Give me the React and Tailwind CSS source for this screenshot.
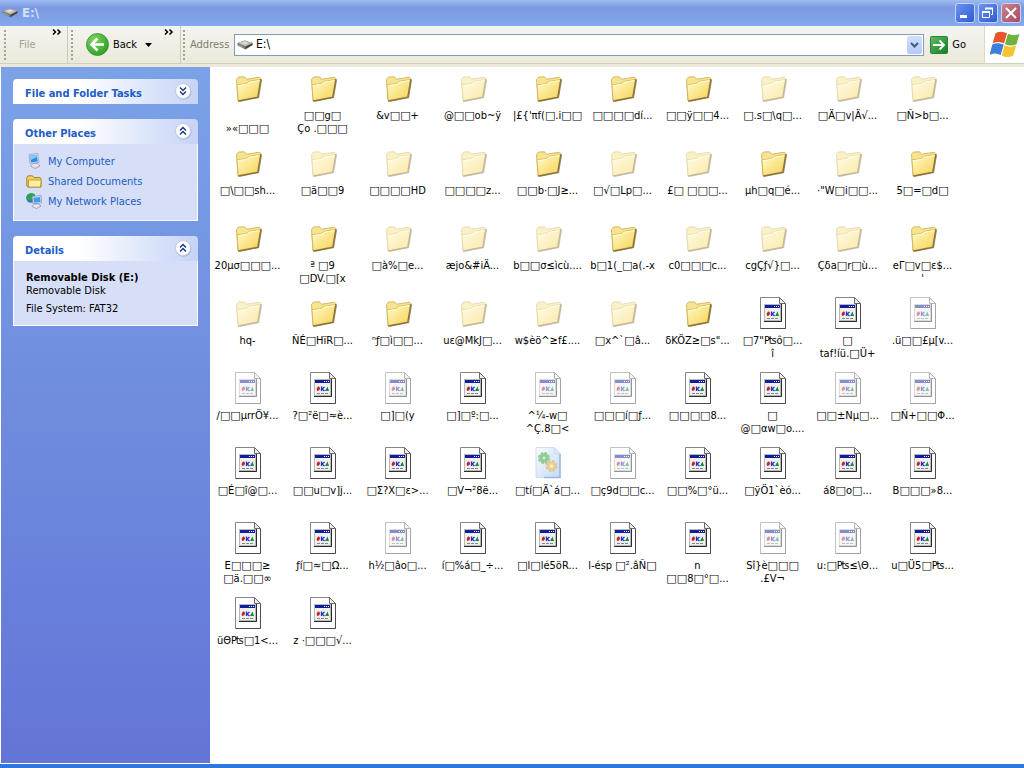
import React, { useState } from 'react';

// Each entry: [kind, label, hidden]. Labels keep their own line breaks.
const ITEMS = [
  ['folder', '\n»«□□□'],
  ['folder', '□□g□\nÇo .□□□'],
  ['folder', '&v□□+'],
  ['folder', '@□□ob~ÿ', true],
  ['folder', "|£{'πf(□.i□□"],
  ['folder', '□□□□dí...'],
  ['folder', '□□ÿ□□4...'],
  ['folder', '□.s□\\q□...', true],
  ['folder', '□Ä□v|Ä√...', true],
  ['folder', '□Ñ>b□...', true],

  ['folder', '□\\□□sh...'],
  ['folder', '□ä□□9', true],
  ['folder', '□□□□HD', true],
  ['folder', '□□□□z...', true],
  ['folder', '□□b·□J≥...'],
  ['folder', '□√□Lp□...', true],
  ['folder', '£□ □□□...', true],
  ['folder', 'µh□q□é...'],
  ['folder', '·"W□i□□...', true],
  ['folder', '5□=□d□'],

  ['folder', '20µσ□□□...'],
  ['folder', 'ª □9\n□DV.□[x'],
  ['folder', '□à%□e...', true],
  ['folder', 'æjo&#iÄ...', true],
  ['folder', 'b□□σ≤ìcù....', true],
  ['folder', 'b□1(_□a(.-x'],
  ['folder', 'c0□□□c...', true],
  ['folder', 'cgÇƒ√}□...', true],
  ['folder', 'Çδa□r□ù...', true],
  ['folder', "eΓ□v□ε$...\n'"],

  ['folder', 'hq-', true],
  ['folder', 'ÑÉ□HïR□...'],
  ['folder', 'ⁿƒ□ì□□...'],
  ['folder', 'uε@MkJ□...', true],
  ['folder', 'w$èö^≥f£....', true],
  ['folder', '□x^`□â...', true],
  ['folder', 'δKÖZ≥□s"...'],
  ['file', '□7"₧ô□...\nî'],
  ['file', '□\ntaf!íü.□Ü+'],
  ['file', '.ü□□£µ[v...', true],

  ['file', '/□□µrrÖ¥...', true],
  ['file', '?□²ë□≈è...'],
  ['file', '□]□(y', true],
  ['file', '□]□º:□...'],
  ['file', '^¼-w□\n^Ç.8□<', true],
  ['file', '□□□í□ƒ...', true],
  ['file', '□□□□8...'],
  ['file', '□\n@□αw□o....'],
  ['file', '□□±Nµ□...', true],
  ['file', '□Ñ+□□Φ...', true],

  ['file', '□É□î@□...'],
  ['file', '□□u□v]j...'],
  ['file', '□Σ?X□ε>...'],
  ['file', '□V¬²8ë...'],
  ['config', '□tí□Ä`á□...', true],
  ['file', '□ç9d□□c...', true],
  ['file', '□□%□°ü...'],
  ['file', '□ÿÖ1`èó...'],
  ['file', 'á8□o□...'],
  ['file', 'B□□□»8...'],

  ['file', 'E□□□≥\n□ä.□□∞'],
  ['file', 'ƒí□≈□Ω...'],
  ['file', 'h½□âo□...', true],
  ['file', 'í□%á□_÷...'],
  ['file', '□l□lé5öR...'],
  ['file', 'l-ésp □².âÑ□'],
  ['file', 'n\n□□8□°□...'],
  ['file', 'Sî}è□□□\n.£V¬', true],
  ['file', 'u:□₧≤\\Θ...', true],
  ['file', 'u□Ü5□₧...'],

  ['file', 'üΘ₧□1<...'],
  ['file', 'z ·□□□√...'],
];

function FolderIcon() {
  return (
    <svg width="32" height="32" viewBox="0 0 32 32" aria-hidden="true">
      <path d="M7 30L27 26 30 8l-2-1z" fill="#5f5436" opacity=".7" />
      <path d="M4.500 7.500L6.500 5l6-.2L14.500 7.200 27.500 5.200 28.800 6.500 25.800 25 6 28.800z" fill="#f7e48f" stroke="#c9a951" strokeWidth=".8" />
      <path d="M5 12.800L14 11.700 17.300 9.300 28.500 7.500 25.500 24.800 6.200 28.600z" fill="url(#folderFront)" stroke="#cfaa46" strokeWidth=".7" />
      <path d="M5.800 13.700l8.600-1.200 3.200-2.300L27.600 8.600" fill="none" stroke="#fffde2" />
      <path d="M6 29.200L25.800 25.300 28.900 7" fill="none" stroke="#8a7136" strokeWidth="1.200" />
    </svg>
  );
}

function FileIcon() {
  return (
    <svg width="32" height="32" viewBox="0 0 32 32" aria-hidden="true">
      <path d="M3.500.5h19l6 6v25h-25z" fill="#fff" stroke="#858585" />
      <path d="M28.500 6.500v25h-25" fill="none" stroke="#4c4c4c" />
      <path d="M22.500.5v6h6z" fill="#ececec" stroke="#6a6a6a" />
      <path d="M7 7h18v18H7z" fill="#b9b9b5" />
      <path d="M8 11h15v12H8z" fill="#efefed" />
      <path d="M8 8h15v3H8z" fill="#101d9c" />
      <path d="M17 9.500h1M19 9.500h1M21 9.500h1" stroke="#fff" />
      <path d="M24.500 7v17.500H7" fill="none" stroke="#2b2b2b" />
      <path d="M11.500 14.500c2.500.5 1.500 4.500-1 4.500-1.500-1-.7-4 1-4.500z" fill="#c5231f" />
      <path d="M14.500 14.500v4.500M17.500 15l-2.500 2 2.500 2" fill="none" stroke="#2232c8" strokeWidth="1.300" />
      <path d="M18 19l2.500-4.500L22 19z" fill="#118a4a" />
      <path d="M10 21.500h3M14 21.500h3M18 21.500h3" stroke="#85858c" />
    </svg>
  );
}

function ConfigIcon() {
  return (
    <svg width="32" height="32" viewBox="0 0 32 32" aria-hidden="true">
      <path d="M4 .5h18l6 6v24H4z" fill="url(#configPage)" stroke="#8fb0de" strokeWidth=".8" />
      <path d="M28 7v23.500H12" fill="none" stroke="#3a6fbe" strokeWidth="1.500" />
      <path d="M22 .5v6h6z" fill="#b3d1f5" stroke="#8fb0de" strokeWidth=".6" />
      <circle cx="12" cy="11" r="4.500" fill="#279a2c" stroke="#279a2c" strokeWidth="3" strokeDasharray="2.500 1" />
      <circle cx="19.500" cy="19" r="4.500" fill="#dca92a" stroke="#c8912a" strokeWidth="3" strokeDasharray="2.500 1" />
      <circle cx="12" cy="11" r="1.500" fill="#a9dba8" />
      <circle cx="19.500" cy="19" r="1.500" fill="#f5e6b0" />
    </svg>
  );
}

function DriveIcon() {
  return (
    <svg width="16" height="16" viewBox="0 0 16 16" aria-hidden="true" className="shrink-0">
      <path d="M.5 6L8 3.500 15.500 6v2L8.500 12.500.5 8.500z" fill="#77776f" />
      <path d="M.5 6L8 3.500 15.500 6 8.500 9.500z" fill="#b5b5b0" />
      <path d="M3 6l5-1.500L12 6l-4 1.700z" fill="#dcdcd8" />
      <path d="M8.500 9.800l7-3.500v1.800l-7 4z" fill="#44443f" />
      <path d="M1.500 8l5 2.500" stroke="#a8a89f" />
    </svg>
  );
}

function ComputerIcon() {
  return (
    <svg width="16" height="16" viewBox="0 0 16 16" aria-hidden="true">
      <path d="M3 1.500L11.500.5l1.500 9-9 1z" fill="#d9dfec" stroke="#8d99b5" strokeWidth=".7" />
      <path d="M4.200 2.700l6.500-.8 1 6.500-6.700.8z" fill="#2b8be8" />
      <path d="M4.200 2.700l6.500-.8.3 2-6.300 3z" fill="#82ccf8" />
      <path d="M7 10.500h4l3 2.500-5 2.500L4.500 13z" fill="#e5e5ea" stroke="#8b8fa4" strokeWidth=".7" />
    </svg>
  );
}

function SharedIcon() {
  return (
    <svg width="16" height="16" viewBox="0 0 16 16" aria-hidden="true">
      <path d="M.8 4.500L2 2.800h4.500L8 4.500h6l1 1.500v8H2L.8 13z" fill="#f0cf5a" stroke="#a88225" />
      <path d="M2.500 7h12.700l-.7 7H2.500z" fill="#fdf0a0" stroke="#b68e2d" strokeWidth=".8" />
    </svg>
  );
}

function NetworkIcon() {
  return (
    <svg width="16" height="16" viewBox="0 0 16 16" aria-hidden="true">
      <circle cx="5" cy="5" r="4.800" fill="#2f76c9" />
      <path d="M1 3c3-4 7-3 8-1L7 6 3 8C1 7 0 5 1 3z" fill="#34a345" />
      <path d="M6 3.500l9-1 .8 7.500-8.800.8z" fill="#dce5f2" stroke="#7e8fae" strokeWidth=".7" />
      <path d="M7.200 4.700l6.800-.8.600 5-6.500.8z" fill="#3d9cef" />
      <path d="M8.500 11h4l2.500 2-4.500 2.500L6 13.500z" fill="#e6e6eb" stroke="#8388a0" strokeWidth=".7" />
    </svg>
  );
}

function WindowsFlag() {
  return (
    <svg width="30" height="28" viewBox="0 0 30 28" aria-hidden="true">
      <path d="M5.500 2.200C9 .3 13 .3 17 2.300L14 12.600c-4-2-7.500-2-11.400-.2z" fill="#e8562a" />
      <path d="M18 2.800c4 1.900 7.500 1.900 11.500 0l-3 10.400c-4 1.900-7.500 1.800-11.500-.1z" fill="#6cb43f" />
      <path d="M2.300 13.500c3.900-1.800 7.400-1.800 11.400.2l-3 10.300C7 22 3.500 22-.5 24z" fill="#3f7fdc" />
      <path d="M14.700 14.200c4 1.900 7.500 2 11.500.1l-3 10.400c-4 1.900-7.500 1.800-11.500-.2z" fill="#f9c432" />
    </svg>
  );
}

function DoubleChevron({ up }) {
  return (
    <svg width="18" height="18" viewBox="0 0 18 18" aria-hidden="true">
      <circle cx="9.500" cy="9.800" r="8" fill="#8896c4" opacity=".5" />
      <circle cx="9" cy="9" r="7.500" fill="#fff" stroke="#c5cce6" />
      <path
        d={up ? 'M6 8.500l3-3 3 3M6 12.500l3-3 3 3' : 'M6 5.500l3 3 3-3M6 9.500l3 3 3-3'}
        fill="none"
        stroke="#1c3a86"
        strokeWidth="1.500"
      />
    </svg>
  );
}

function MoreButton({ label }) {
  return (
    <button aria-label={label} className="self-start pt-[3px]">
      <svg width="10" height="6" viewBox="0 0 10 6" aria-hidden="true">
        <path d="M1 .5L3.500 3 1 5.500M5.500 .5L8 3 5.500 5.500" fill="none" stroke="#000" strokeWidth="1.500" />
      </svg>
    </button>
  );
}

function Grip() {
  return (
    <svg width="3" height="32" viewBox="0 0 3 32" aria-hidden="true" className="shrink-0">
      <path d="M1 1v31" stroke="#a5a295" strokeWidth="2" strokeDasharray="2 2" />
    </svg>
  );
}

function TitleBar() {
  const box = 'flex h-5 w-5 items-center justify-center rounded-[3px] border border-[#c5d5f8]';
  return (
    <header className="flex h-[26px] items-center bg-linear-to-b from-[#9dbcf2] via-[#7a98e0] via-30% to-[#83a9ee] pl-[2px] pr-[3px]">
      <DriveIcon />
      <h1 className="ml-1 grow text-[13px] font-bold leading-4 text-[#d3e1fa]">E:\</h1>
      <div className="flex gap-[3px]">
        <button aria-label="Minimize" className={`${box} bg-linear-to-br from-[#6d92ee] to-[#2d5ad2]`}>
          <svg width="16" height="16" viewBox="0 0 16 16" aria-hidden="true">
            <path d="M3 11.500h7" stroke="#fff" strokeWidth="3" />
          </svg>
        </button>
        <button aria-label="Restore" className={`${box} bg-linear-to-br from-[#6d92ee] to-[#2d5ad2]`}>
          <svg width="16" height="16" viewBox="0 0 16 16" aria-hidden="true" fill="none" stroke="#fff">
            <path d="M5.500 5V3.500h7v6H11" />
            <path d="M5 3.500h8" strokeWidth="2" />
            <path d="M2.500 7v5.500h7V7" />
            <path d="M2 7h8" strokeWidth="2" />
          </svg>
        </button>
        <button aria-label="Close" className={`${box} bg-linear-to-br from-[#c9838f] to-[#a84c5c]`}>
          <svg width="16" height="16" viewBox="0 0 16 16" aria-hidden="true">
            <path d="M3 3l10 10M13 3L3 13" stroke="#fff" strokeWidth="2" />
          </svg>
        </button>
      </div>
    </header>
  );
}

function Toolbar() {
  const [address, setAddress] = useState('E:\\');

  return (
    <div className="flex h-[38px] border-b border-[#d3cfbf] bg-linear-to-b from-[#f4f4f0] to-[#ebe9da]">
      <div className="flex w-[68px] items-center border-r border-[#cdc9b8] pl-1 pr-[5px]">
        <Grip />
        <button className="ml-3 text-[#a3a193]" disabled>File</button>
        <span className="grow" />
        <MoreButton label="More menus" />
      </div>
      <div className="flex w-[113px] items-center border-r border-[#cdc9b8] pl-[3px] pr-[6px]">
        <Grip />
        <button className="ml-3 flex items-center gap-1">
          <svg width="23" height="23" viewBox="0 0 23 23" aria-hidden="true">
            <circle cx="11.500" cy="11.500" r="11" fill="url(#backGreen)" stroke="#3c8f32" strokeWidth=".8" />
            <path d="M18 11.500H6M11.500 5.500l-6 6 6 6" fill="none" stroke="#fff" strokeWidth="2.600" />
          </svg>
          Back
        </button>
        <button aria-label="Back history" className="ml-2">
          <svg width="7" height="4" viewBox="0 0 7 4" aria-hidden="true">
            <path d="M0 0h7L3.500 4z" fill="#000" />
          </svg>
        </button>
        <span className="grow" />
        <MoreButton label="More buttons" />
      </div>
      <form className="flex grow items-center pl-[2px]" onSubmit={(e) => e.preventDefault()}>
        <Grip />
        <label htmlFor="address" className="ml-1 w-11 text-[#807d70]">Address</label>
        <div className="flex h-[22px] grow items-center border border-[#7f9db9] bg-white pl-[2px] pr-px">
          <DriveIcon />
          <input
            id="address"
            value={address}
            onChange={(e) => setAddress(e.target.value)}
            className="ml-[3px] min-w-0 grow text-[12px] outline-none"
          />
          <button type="button" aria-label="Address history" className="flex h-[18px] w-[15px] items-center justify-center rounded-[2px] bg-linear-to-b from-[#d3e0fc] to-[#b3c9f7]">
            <svg width="9" height="6" viewBox="0 0 9 6" aria-hidden="true">
              <path d="M1 1l3.500 3.500L8 1" fill="none" stroke="#45597f" strokeWidth="2" />
            </svg>
          </button>
        </div>
        <button className="ml-[6px] mr-[18px] flex items-center gap-1">
          <svg width="18" height="18" viewBox="0 0 18 18" aria-hidden="true">
            <rect x=".5" y=".5" width="17" height="17" rx="1" fill="url(#goGreen)" stroke="#2b8436" />
            <path d="M3 9h11M9.500 4.500L14 9l-4.500 4.500" fill="none" stroke="#fff" strokeWidth="1.800" />
          </svg>
          Go
        </button>
      </form>
      <div className="flex w-10 items-center justify-center border-l border-[#dcd8c8] bg-white">
        <WindowsFlag />
      </div>
    </div>
  );
}

function Panel({ title, open, children }) {
  return (
    <section>
      <div className="flex h-[25px] items-center justify-between rounded-t-[4px] bg-linear-to-r from-white from-35% to-[#c6d3f7] pl-3 pr-[6px]">
        <h2 className="pt-[3px] font-bold text-[#215dc6]">{title}</h2>
        <button aria-label={title} aria-expanded={open} className="pb-[2px]">
          <DoubleChevron up={open} />
        </button>
      </div>
      {open && <div className="border border-t-0 border-white bg-[#d6dff7] px-3">{children}</div>}
    </section>
  );
}

function PlaceLink({ icon, children }) {
  return (
    <li>
      <a href="#" className="flex h-5 items-center gap-[6px] text-[#215dc6]">
        {icon}
        {children}
      </a>
    </li>
  );
}

function Sidebar() {
  return (
    <aside className="flex w-[209px] shrink-0 flex-col gap-[15px] bg-linear-to-b from-[#7ba2e7] to-[#6375d6] p-3">
      <Panel title="File and Folder Tasks" open={false} />
      <Panel title="Other Places" open>
        <ul className="pb-[9px] pt-[7px]">
          <PlaceLink icon={<ComputerIcon />}>My Computer</PlaceLink>
          <PlaceLink icon={<SharedIcon />}>Shared Documents</PlaceLink>
          <PlaceLink icon={<NetworkIcon />}>My Network Places</PlaceLink>
        </ul>
      </Panel>
      <Panel title="Details" open>
        <div className="pb-[10px] pt-[10px]">
          <p className="font-bold">Removable Disk (E:)</p>
          <p>Removable Disk</p>
          <p className="mt-[5px]">File System: FAT32</p>
        </div>
      </Panel>
    </aside>
  );
}

const ICONS = { folder: FolderIcon, file: FileIcon, config: ConfigIcon };

// Runs of boxes are set in the wider face.
function Label({ text }) {
  return (
    <span className="whitespace-pre text-center">
      {text.split(/(□+)/).map((part, i) =>
        part.startsWith('□') ? (
          <span key={i} className="font-['DejaVu_Sans',sans-serif]">{part}</span>
        ) : (
          part
        )
      )}
    </span>
  );
}

function Item({ kind, label, hidden }) {
  const Icon = ICONS[kind];
  return (
    <li className="flex flex-col items-center gap-[5px]">
      <span className={hidden ? 'opacity-50' : ''}>
        <Icon />
      </span>
      <Label text={label} />
    </li>
  );
}

export default function App() {
  return (
    <div className="flex min-h-screen flex-col bg-[#ece9d8] font-['DejaVu_Sans_Condensed','DejaVu_Sans',sans-serif] text-[11px] leading-[13px] text-black">
      <svg className="absolute h-0 w-0" aria-hidden="true">
        <defs>
          <linearGradient id="folderFront" x1="0" y1="0" x2="1" y2="1">
            <stop offset="0" stopColor="#fffbc8" />
            <stop offset="1" stopColor="#f7d255" />
          </linearGradient>
          <linearGradient id="configPage" x1="0" y1="0" x2="1" y2="1">
            <stop offset="0" stopColor="#f4f9ff" />
            <stop offset="1" stopColor="#8ab7f0" />
          </linearGradient>
          <radialGradient id="backGreen" cx=".35" cy=".3" r=".8">
            <stop offset="0" stopColor="#7ed662" />
            <stop offset="1" stopColor="#2a9a22" />
          </radialGradient>
          <linearGradient id="goGreen" x1="0" y1="0" x2="1" y2="1">
            <stop offset="0" stopColor="#5fbf62" />
            <stop offset="1" stopColor="#157c25" />
          </linearGradient>
        </defs>
      </svg>
      <TitleBar />
      <Toolbar />
      <main className="mt-[3px] flex grow border-b border-l border-white bg-white">
        <Sidebar />
        <ul className="grid grow auto-rows-[75px] grid-cols-[repeat(auto-fill,75px)] pt-[5px]">
          {ITEMS.map(([kind, label, hidden]) => (
            <Item key={label} kind={kind} label={label} hidden={hidden} />
          ))}
        </ul>
      </main>
      <footer className="h-1 bg-[#2f76dd]" />
    </div>
  );
}
